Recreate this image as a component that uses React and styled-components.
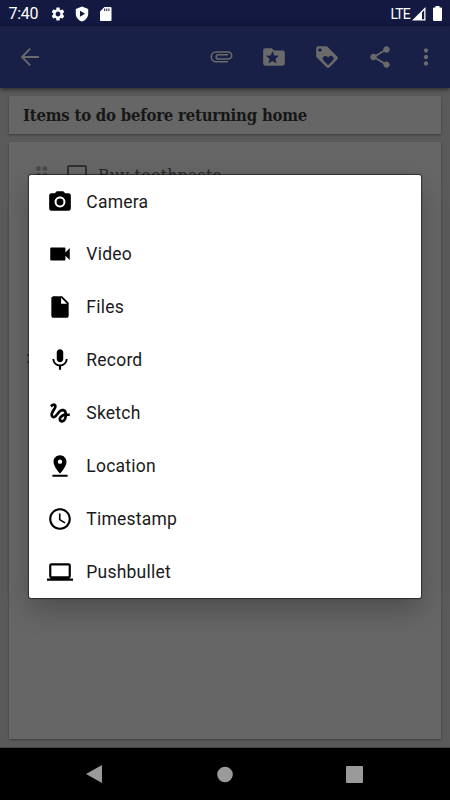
import React from "react";
import styled, { createGlobalStyle } from "styled-components";
import {
  MdSettings, MdLoyalty, MdShare, MdMoreVert,
  MdPhotoCamera, MdVideocam, MdInsertDriveFile, MdMic, MdGesture, MdPinDrop,
  MdAccessTime, MdLaptop,
} from "react-icons/md";

const Global = createGlobalStyle`
  * { box-sizing: border-box; }
  body { margin: 0; background: #000; font-family: Roboto, sans-serif; }
`;
const Screen = styled.div`
  position: relative;
  width: 450px;
  height: 800px;
  overflow: hidden;
  display: flex;
  flex-direction: column;
  background: #5a5a5a;
`;
const StatusBar = styled.header`
  height: 26px;
  flex: none;
  background: #141942;
  color: #fff;
  display: flex;
  align-items: center;
  padding: 1px 8px 0 8.5px;
  svg { display: block; flex: none; }
`;
const Clock = styled.span`
  width: 41.5px;
  padding-top: 1px;
  font-size: 16px;
  letter-spacing: -0.25px;
  line-height: 24px;
`;
const StatusIcons = styled.div`
  display: flex;
  align-items: center;
  gap: 8px;
  flex: 1;
`;
const Network = styled.span`
  font-size: 14px;
  letter-spacing: -0.8px;
  margin-right: 2px;
`;
const Signal = styled.div`
  display: flex;
  align-items: center;
  gap: 7px;
`;
const Toolbar = styled.nav`
  height: 62px;
  flex: none;
  display: flex;
  align-items: center;
  padding: 0 11px 1px 17px;
  background: #192048;
  color: #6a6a6a;
  box-shadow: 0 1px 5px rgba(0, 0, 0, 0.65);
  z-index: 1;
  svg { display: block; }
`;
const Actions = styled.div`
  display: flex;
  align-items: center;
  margin-left: auto;
  gap: 27px;
`;
const More = styled.div`
  margin: 0 0 0 -7px;
`;
const Content = styled.main`
  flex: 1;
  display: flex;
  flex-direction: column;
  gap: 8px;
  padding: 8px 9px 8px 9px;
  border-bottom: 1px solid #444;
`;
const Card = styled.section`
  background: #666;
  box-shadow: 0 1px 2px rgba(0, 0, 0, 0.35);
  flex: ${(p) => (p.$fill ? "1" : "none")};
`;
const Title = styled.h1`
  margin: 0;
  height: 38px;
  padding-left: 14px;
  font: 700 16.6px/39px "Roboto Slab", "DejaVu Serif Condensed", "DejaVu Serif", serif;
  letter-spacing: -0.22px;
  color: #171717;
  white-space: nowrap;
`;
const Task = styled.div`
  display: flex;
  align-items: center;
  padding: 20px 0 0 27px;
  height: 46px;
  color: #292929;
  font: 17.5px/24px "Roboto Slab", "DejaVu Serif Condensed", "DejaVu Serif", serif;
  letter-spacing: 0.25px;
`;
const HiddenTask = styled.div`
  margin-top: 157px;
  padding-left: 17px;
  font: 17px/24px Roboto, sans-serif;
  color: #1c1c1c;
`;
const Grip = styled.span`
  width: 12px;
  height: 18px;
  background: radial-gradient(circle at 2.5px 2.5px, #484848 2px, transparent 2.6px) 0 0 / 6.5px 6.5px;
`;
const Checkbox = styled.span`
  width: 20px;
  height: 20px;
  margin: 0 11px 0 19px;
  border: 2px solid #303030;
  border-radius: 2px;
`;
const NavBar = styled.footer`
  height: 52px;
  flex: none;
  background: #000;
  display: flex;
  align-items: center;
  justify-content: space-between;
  padding: 0 87px 0 86px;
  svg { display: block; }
`;
const Dialog = styled.div`
  position: absolute;
  left: 29px;
  top: 175px;
  width: 392px;
  height: 423px;
  background: #fff;
  border-radius: 2px;
  box-shadow: 0 0 1px 1px rgba(0, 0, 0, 0.5), 0 12px 28px rgba(0, 0, 0, 0.24);
  z-index: 2;
`;
const OptionList = styled.div`
  padding-top: 0.1px;
`;
const Option = styled.div`
  height: 52.9px;
  display: flex;
  align-items: center;
  padding-left: 18px;
  color: #000;
  svg { width: 26px; height: 26px; flex: none; }
`;
const Label = styled.span`
  margin-left: 13.3px;
  font-size: 17.5px;
  letter-spacing: 0.22px;
  color: #1a1a1a;
`;

const options = [
  ["Camera", MdPhotoCamera], ["Video", MdVideocam], ["Files", MdInsertDriveFile],
  ["Record", MdMic], ["Sketch", MdGesture], ["Location", MdPinDrop],
  ["Timestamp", MdAccessTime], ["Pushbullet", MdLaptop],
];

export default function App() {
  return (
    <Screen>
      <Global />
      <StatusBar>
        <Clock>7:40</Clock>
        <StatusIcons>
          <MdSettings size={16} />
          <svg width="16" height="16" viewBox="0 0 16 16" fill="#fff">
            <path fillRule="evenodd" d="M8 .5 14.2 3v4.7c0 3.7-2.6 6.7-6.2 7.8-3.6-1.1-6.2-4.1-6.2-7.8V3ZM6 4.8v6L11 7.8Z" />
          </svg>
          <svg width="16" height="16" viewBox="0 0 16 16" fill="#fff">
            <path fillRule="evenodd" d="M6.4 1H12.5q1 0 1 1v12q0 1-1 1h-9.5Q2 15 2 14V5.4ZM6.2 2.5v2.4h1V2.5Zm2.1 0v2.4h1V2.5Zm2.1 0v2.4h1V2.5Z" />
          </svg>
        </StatusIcons>
        <Network>LTE</Network>
        <Signal>
          <svg width="14" height="14" viewBox="0 0 14 14" fill="#fff">
            <path fillRule="evenodd" d="M0 13.5 13.5 0v13.5ZM10 5.5v6.7h2.2V3.3Z" />
          </svg>
          <svg width="9" height="15" viewBox="0 0 9 15" fill="#fff">
            <path d="M2.5 0h4v1.6H8q1 0 1 1V14q0 1-1 1H1q-1 0-1-1V2.6q0-1 1-1h1.5Z" />
          </svg>
        </Signal>
      </StatusBar>
      <Toolbar>
        <svg width="26" height="26" viewBox="0 0 26 26" fill="none" stroke="currentColor" strokeWidth="1.9">
          <path d="M22 13H5M13.2 4.7 5 13l8.2 8.3" />
        </svg>
        <Actions>
          <svg width="26" height="26" viewBox="0 0 26 26" fill="none" stroke="currentColor" strokeWidth="1.6">
            <path d="M20 17.8H8.2a4.9 4.9 0 0 1 0-9.8h12a3.5 3.5 0 0 1 0 7h-9.9a2.1 2.1 0 0 1 0-4.2H20" />
          </svg>
          <svg width="26" height="26" viewBox="0 0 24 24" fill="currentColor">
            <path fillRule="evenodd" d="M20 6h-8l-2-2H4q-2 0-2 2v12q0 2 2 2h16q2 0 2-2V8q0-2-2-2Zm-5.7 12L10.6 15.8 6.9 18l1-4.2-3.3-2.9 4.3-.4 1.7-4 1.7 4 4.3.4-3.3 2.9Z" />
          </svg>
          <MdLoyalty size={26} />
          <MdShare size={26} />
          <More><MdMoreVert size={26} /></More>
        </Actions>
      </Toolbar>
      <Content>
        <Card><Title>Items to do before returning home</Title></Card>
        <Card $fill>
          <Task><Grip /><Checkbox />Buy toothpaste</Task>
          <HiddenTask>:</HiddenTask>
        </Card>
      </Content>
      <NavBar>
        <svg width="16" height="18" viewBox="0 0 16 18"><path d="M0 9 16 0v18Z" fill="#9a9a9a" /></svg>
        <svg width="17" height="17" viewBox="0 0 17 17"><circle cx="9" cy="8.5" r="7.8" fill="#9a9a9a" /></svg>
        <svg width="17" height="17" viewBox="0 0 17 17"><rect width="17" height="17" rx="1" fill="#9a9a9a" /></svg>
      </NavBar>
      <Dialog>
        <OptionList>
          {options.map(([name, Icon]) => (
            <Option key={name}><Icon /><Label>{name}</Label></Option>
          ))}
        </OptionList>
      </Dialog>
    </Screen>
  );
}
